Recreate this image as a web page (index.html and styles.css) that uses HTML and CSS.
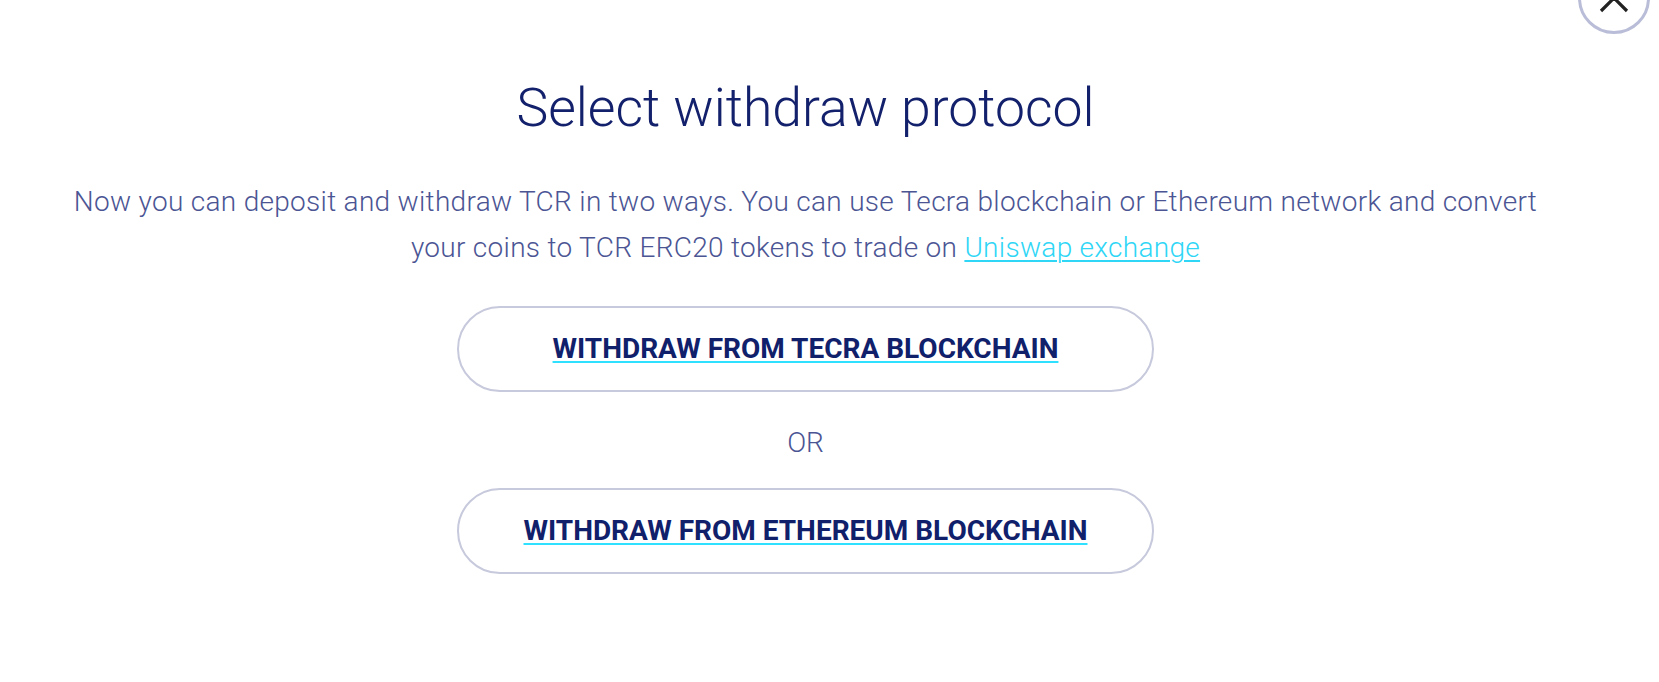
FILE: index.html
```html
<!DOCTYPE html>
<html lang="en">
<head>
<meta charset="utf-8">
<title>Select withdraw protocol</title>
<link rel="stylesheet" href="styles.css">
</head>
<body>
<div class="modal">
  <button class="close" aria-label="Close">
    <svg class="close-icon" width="30" height="30" viewBox="0 0 30 30">
      <path d="M2 2 L28 28 M28 2 L2 28" stroke="#222" stroke-width="3.2" fill="none" stroke-linecap="butt"/>
    </svg>
  </button>
  <h1 class="title">Select withdraw protocol</h1>
  <p class="desc">Now you can deposit and withdraw TCR in two ways. You can use Tecra blockchain or Ethereum network and convert your coins to TCR ERC20 tokens to trade on <a class="link" href="#">Uniswap exchange</a></p>
  <a class="option" href="#"><span class="option-label">WITHDRAW FROM TECRA BLOCKCHAIN</span></a>
  <div class="or">OR</div>
  <a class="option option-second" href="#"><span class="option-label">WITHDRAW FROM ETHEREUM BLOCKCHAIN</span></a>
</div>
</body>
</html>
```
FILE: styles.css
```css
html, body {
  margin: 0;
  padding: 0;
  background: #ffffff;
  overflow: hidden;
}
body {
  width: 1659px;
  height: 682px;
  position: relative;
  font-family: Roboto, "Liberation Sans", sans-serif;
}
.modal {
  width: 1611px;
  display: flex;
  flex-direction: column;
  align-items: center;
  padding-top: 78px;
}
.close {
  position: absolute;
  left: 1578px;
  top: -38px;
  width: 72px;
  height: 72px;
  box-sizing: border-box;
  border: 3px solid #b9bdd7;
  border-radius: 50%;
  background: #fff;
  padding: 0;
  display: flex;
  align-items: center;
  justify-content: center;
}
.close-icon {
  display: block;
}
.title {
  margin: 0;
  font-size: 53.5px;
  font-weight: 300;
  line-height: 60px;
  color: #13206b;
}
.desc {
  margin: 41px 0 0;
  width: 1500px;
  text-align: center;
  font-size: 28px;
  font-weight: 300;
  letter-spacing: 0.3px;
  line-height: 46px;
  color: #4b5594;
}
.link {
  color: #2fd6f6;
  text-decoration: underline;
  text-decoration-thickness: 1.5px;
  text-underline-offset: 3px;
}
.option {
  margin-top: 35px;
  width: 697px;
  height: 86px;
  box-sizing: border-box;
  border: 2px solid #c7c9dc;
  border-radius: 43px;
  display: flex;
  align-items: center;
  justify-content: center;
  text-decoration: none;
}
.option-label {
  font-size: 28px;
  font-weight: 700;
  color: #10206b;
  line-height: 30px;
  text-decoration: underline;
  text-decoration-color: #2fe1ff;
  text-decoration-thickness: 2px;
  text-underline-offset: 3px;
}
.or {
  margin-top: 36px;
  font-size: 28px;
  font-weight: 300;
  color: #4b5594;
  line-height: 30px;
}
.option-second {
  margin-top: 30px;
}
```
